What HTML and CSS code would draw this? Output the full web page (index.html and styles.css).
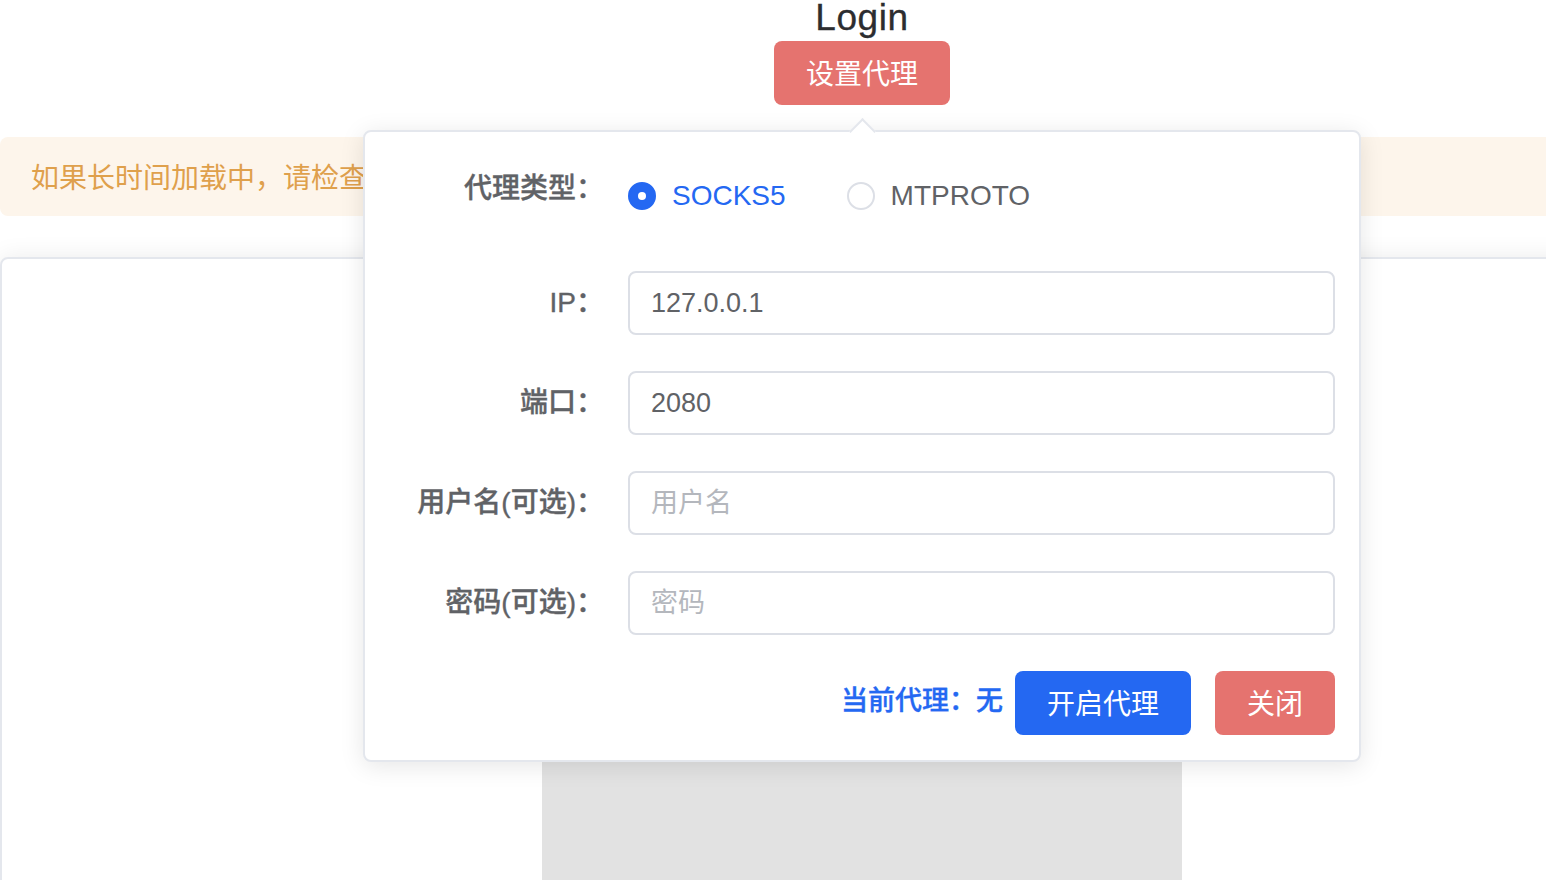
FILE: index.html
```html
<!DOCTYPE html>
<html lang="zh-CN">
<head>
<meta charset="utf-8">
<title>Login</title>
<link rel="stylesheet" href="styles.css">
</head>
<body>
<div class="page">
  <h2 class="title">Login</h2>
  <div class="proxy-anchor">
    <button class="btn btn-danger btn-proxy">设置代理</button>
    <div class="popover">
      <div class="popover-arrow"></div>
      <form class="form">
        <div class="form-row row-type">
          <label class="form-label">代理类型：</label>
          <div class="radio-group">
            <span class="radio checked"><span class="radio-dot"></span><span class="radio-text">SOCKS5</span></span>
            <span class="radio"><span class="radio-dot"></span><span class="radio-text">MTPROTO</span></span>
          </div>
        </div>
        <div class="form-row">
          <label class="form-label">IP：</label>
          <input class="input" type="text" value="127.0.0.1">
        </div>
        <div class="form-row">
          <label class="form-label">端口：</label>
          <input class="input" type="text" value="2080">
        </div>
        <div class="form-row">
          <label class="form-label">用户名(可选)：</label>
          <input class="input" type="text" placeholder="用户名">
        </div>
        <div class="form-row">
          <label class="form-label">密码(可选)：</label>
          <input class="input" type="password" placeholder="密码">
        </div>
        <div class="actions">
          <span class="current">当前代理：无</span>
          <button type="button" class="btn btn-primary btn-open">开启代理</button>
          <button type="button" class="btn btn-danger btn-close">关闭</button>
        </div>
      </form>
    </div>
  </div>
  <div class="alert">如果长时间加载中，请检查</div>
  <div class="card">
    <div class="qr"></div>
  </div>
</div>
</body>
</html>
```

FILE: styles.css
```css
html, body {
  margin: 0;
  padding: 0;
  overflow: hidden;
  background: #ffffff;
}
body {
  font-family: "Liberation Sans", "Noto Sans CJK SC", sans-serif;
  color: #606266;
  width: 1546px;
  height: 880px;
}
.page {
  width: 1724px;
  display: flex;
  flex-direction: column;
  align-items: center;
}
.title {
  margin: 0;
  font-size: 37px;
  line-height: 36px;
  font-weight: 400;
  letter-spacing: 0.6px;
  color: #2c2d30;
  -webkit-text-stroke: 0.3px #2c2d30;
}
.proxy-anchor {
  position: relative;
  margin-top: 5px;
  z-index: 5;
}
.btn {
  border: none;
  border-radius: 8px;
  color: #ffffff;
  font-family: "Liberation Sans", "Noto Sans CJK SC", sans-serif;
  font-size: 28px;
  height: 64px;
  padding: 0 0 3px 0;
  cursor: pointer;
}
.btn-danger { background: #e5736f; }
.btn-primary { background: #2468f2; }
.btn-proxy { width: 176px; display: block; }

.popover {
  position: absolute;
  top: 89px;
  left: 50%;
  transform: translateX(-50%);
  width: 998px;
  box-sizing: border-box;
  background: #ffffff;
  border: 2px solid #e4e7ed;
  border-radius: 8px;
  box-shadow: 0 4px 24px rgba(0, 0, 0, 0.10);
  padding: 22px 24px 25px 24px;
}
.popover-arrow {
  position: absolute;
  top: -10px;
  left: 50%;
  width: 17px;
  height: 17px;
  margin-left: -9px;
  background: #ffffff;
  border-top: 2px solid #e4e7ed;
  border-left: 2px solid #e4e7ed;
  transform: rotate(45deg);
}
.form {
  display: flex;
  flex-direction: column;
  gap: 36px;
  margin: 0;
}
.form-row {
  display: flex;
  align-items: center;
}
.row-type {
  align-items: flex-start;
  padding-top: 3px;
  margin-bottom: 7px;
}
.form-label {
  width: 239px;
  box-sizing: border-box;
  padding-right: 24px;
  text-align: right;
  font-size: 28px;
  line-height: 64px;
  font-weight: 500;
  color: #606266;
  flex: none;
  -webkit-text-stroke: 0.35px #606266;
}
.radio-group {
  display: flex;
  align-items: center;
  height: 64px;
  margin-top: 7px;
  gap: 61px;
}
.radio {
  display: flex;
  align-items: center;
  gap: 16px;
  font-size: 28px;
  color: #606266;
}
.radio-dot {
  width: 28px;
  height: 28px;
  box-sizing: border-box;
  border-radius: 50%;
  border: 2px solid #dcdfe6;
  background: #ffffff;
  position: relative;
}
.radio.checked .radio-dot {
  border-color: #2468f2;
  background: #2468f2;
}
.radio.checked .radio-dot::after {
  content: "";
  position: absolute;
  width: 8px;
  height: 8px;
  border-radius: 50%;
  background: #ffffff;
  left: 50%;
  top: 50%;
  transform: translate(-50%, -50%);
}
.radio.checked .radio-text { color: #2468f2; }

.input {
  flex: 1;
  height: 64px;
  box-sizing: border-box;
  border: 2px solid #dcdfe6;
  border-radius: 8px;
  padding: 0 21px;
  font-family: "Liberation Sans", "Noto Sans CJK SC", sans-serif;
  font-size: 27px;
  color: #606266;
  outline: none;
  background: #ffffff;
  margin: 0;
}
.input::placeholder { color: #b4b7bd; }

.actions {
  display: flex;
  justify-content: flex-end;
  align-items: center;
  margin-top: 0;
}
.current {
  color: #2468f2;
  font-size: 27px;
  font-weight: 500;
  margin-right: 12px;
  margin-bottom: 10px;
  -webkit-text-stroke: 0.35px #2468f2;
}
.btn-open { width: 176px; }
.btn-close { width: 120px; margin-left: 24px; }

.alert {
  align-self: stretch;
  margin-top: 32px;
  height: 79px;
  background: #fdf5eb;
  border-radius: 8px;
  color: #dfa04c;
  font-size: 28px;
  display: flex;
  align-items: center;
  padding-left: 31px;
  padding-bottom: 1px;
  box-sizing: border-box;
}
.card {
  align-self: stretch;
  margin-top: 41px;
  height: 900px;
  border: 2px solid #e4e7ed;
  border-radius: 8px;
  box-shadow: 0 0 24px rgba(0, 0, 0, 0.08);
  background: #ffffff;
  display: flex;
  justify-content: center;
}
.qr {
  margin-top: 340px;
  width: 640px;
  height: 640px;
  background: #e2e2e2;
}
```
